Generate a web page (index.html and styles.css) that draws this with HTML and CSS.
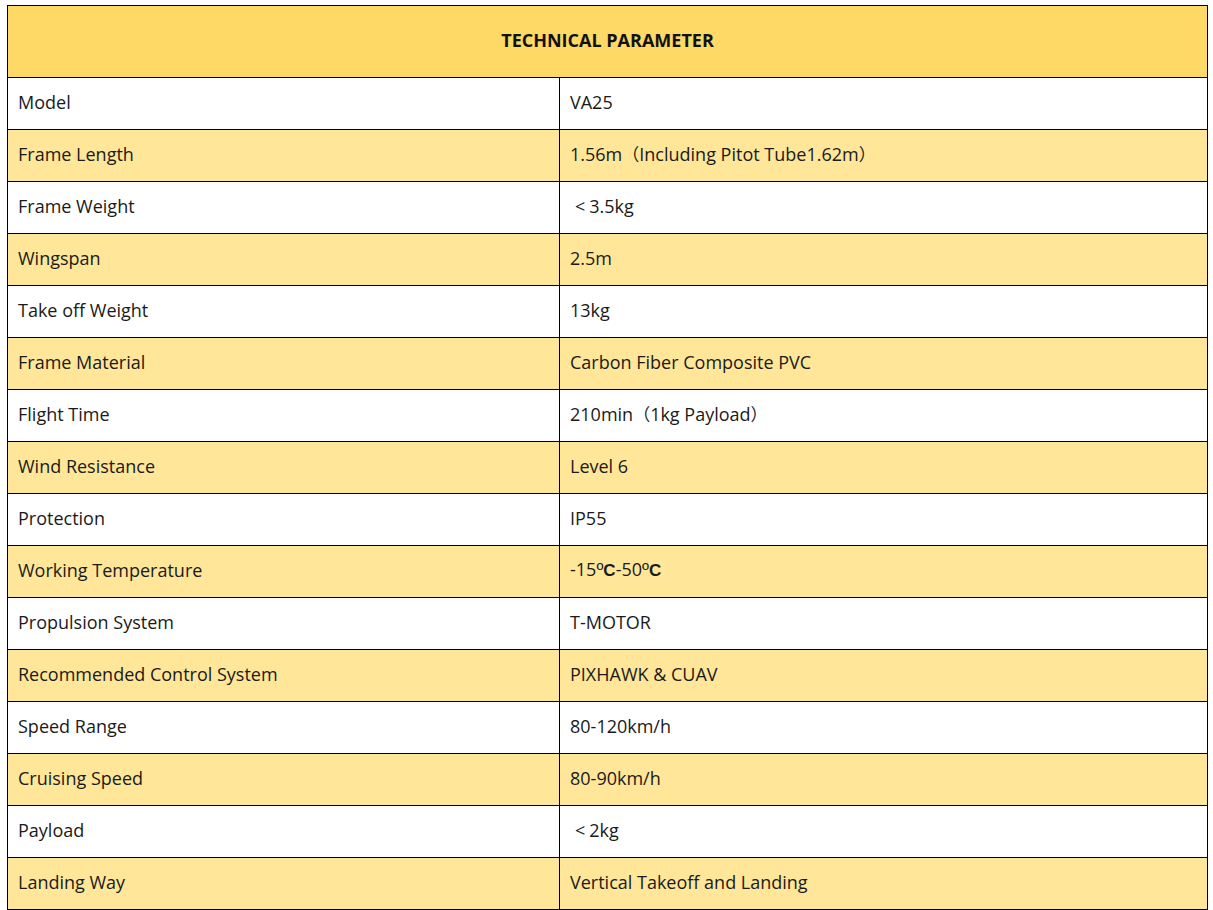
FILE: index.html
```html
<!DOCTYPE html>
<html>
<head>
<meta charset="utf-8">
<link rel="stylesheet" href="styles.css">
</head>
<body>
<div class="wrap">
<table class="spec">
  <colgroup>
    <col class="c1">
    <col class="c2">
  </colgroup>
  <thead>
    <tr><th colspan="2">TECHNICAL PARAMETER</th></tr>
  </thead>
  <tbody>
    <tr><td>Model</td><td>VA25</td></tr>
    <tr class="alt"><td>Frame Length</td><td>1.56m<span class="fw">（</span>Including Pitot Tube1.62m<span class="fw">）</span></td></tr>
    <tr><td>Frame Weight</td><td><span class="lt">&lt;</span>3.5kg</td></tr>
    <tr class="alt"><td>Wingspan</td><td>2.5m</td></tr>
    <tr><td>Take off Weight</td><td>13kg</td></tr>
    <tr class="alt"><td>Frame Material</td><td>Carbon Fiber Composite PVC</td></tr>
    <tr><td>Flight Time</td><td>210min<span class="fw">（</span>1kg Payload<span class="fw">）</span></td></tr>
    <tr class="alt"><td>Wind Resistance</td><td>Level 6</td></tr>
    <tr><td>Protection</td><td>IP55</td></tr>
    <tr class="alt"><td>Working Temperature</td><td>-15<span class="deg">º<b>C</b></span>-50<span class="deg">º<b>C</b></span></td></tr>
    <tr><td>Propulsion System</td><td>T-MOTOR</td></tr>
    <tr class="alt"><td>Recommended Control System</td><td>PIXHAWK &amp; CUAV</td></tr>
    <tr><td>Speed Range</td><td>80-120km/h</td></tr>
    <tr class="alt"><td>Cruising Speed</td><td>80-90km/h</td></tr>
    <tr><td>Payload</td><td><span class="lt">&lt;</span>2kg</td></tr>
    <tr class="alt"><td>Landing Way</td><td>Vertical Takeoff and Landing</td></tr>
  </tbody>
</table>
</div>
</body>
</html>
```
FILE: styles.css
```css
html, body {
  margin: 0;
  padding: 0;
  background: #ffffff;
}
.wrap {
  padding: 5px 0 0 7px;
}
.spec {
  border-collapse: collapse;
  width: 1200px;
  font-family: "Open Sans", "Noto Sans CJK SC", sans-serif;
  font-size: 18px;
  line-height: 24px;
  color: #1a1a1a;
  table-layout: fixed;
}
.spec col.c1 {
  width: 552px;
}
.spec col.c2 {
  width: 648px;
}
.spec th,
.spec td {
  border: 1px solid #000;
  padding: 0 10px 4px;
  text-align: left;
  vertical-align: middle;
  white-space: nowrap;
  box-sizing: border-box;
}
.spec th {
  height: 72px;
  background: #ffd966;
  text-align: center;
  font-weight: 700;
  font-size: 18px;
  color: #111;
}
.spec td {
  height: 52px;
}
.spec tr.alt td {
  background: #ffe699;
}
.fw {
  font-family: "Noto Sans CJK SC", sans-serif;
  font-size: 17px;
}
.lt {
  display: inline-block;
  margin-left: 5px;
  margin-right: 4px;
}
.deg {
  font-family: "Liberation Sans", sans-serif;
  font-size: 19px;
}
.deg b {
  font-weight: 700;
  font-size: 17px;
}
```
